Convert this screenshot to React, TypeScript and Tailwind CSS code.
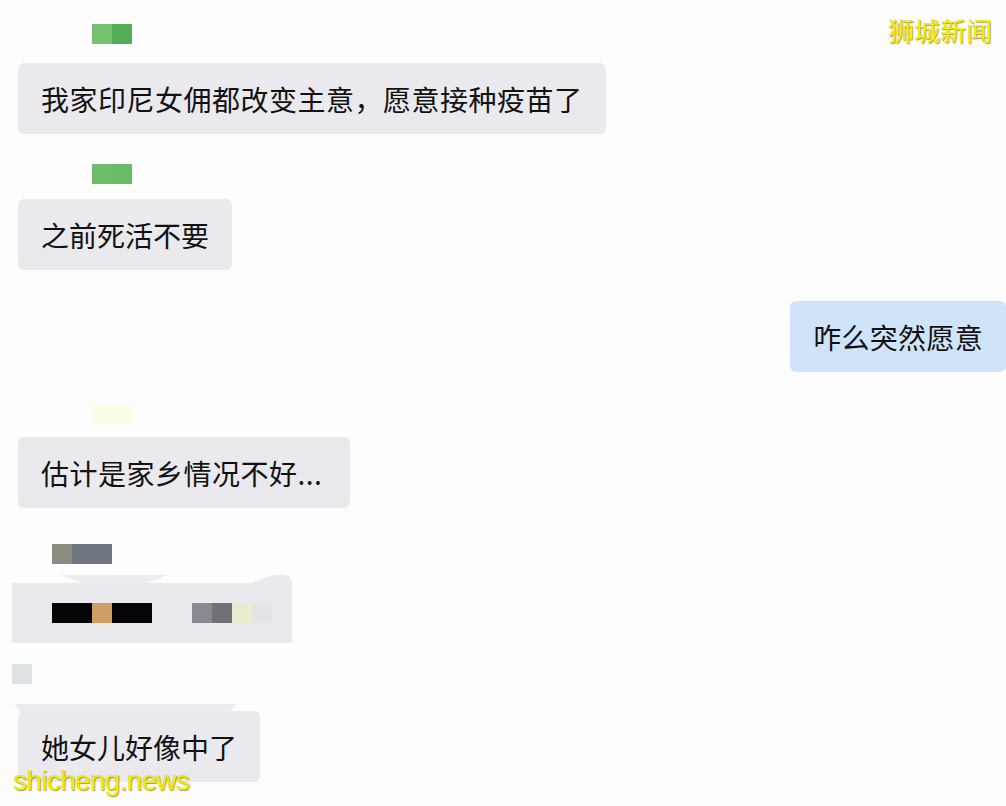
const cjk = { fontFamily: '"Noto Sans CJK SC", "Noto Sans", sans-serif' };

function Bubble({ text, blue = false, extra = '' }: { text: string; blue?: boolean; extra?: string }) {
  return (
    <div
      className={`h-[71px] px-[23px] flex items-center rounded-[6px] text-[28px] leading-none text-[#111] ${
        blue ? 'bg-[#cfe3f9]' : 'bg-[#e9e9ee]'
      } ${extra}`}
      style={cjk}
    >
      {text}
    </div>
  );
}

export default function App() {
  return (
    <div className="relative w-[1006px] h-[806px] overflow-hidden bg-[#fdfdfe]">
      <div className="flex flex-col items-start pt-[24px]">
        {/* sender 1 */}
        <div className="ml-[92px] flex h-[20px]">
          <div className="w-[20px] bg-[#75c271]" />
          <div className="w-[20px] bg-[#56ad57]" />
        </div>
        <div className="mt-[19px] ml-[18px]">
          <Bubble text="我家印尼女佣都改变主意，愿意接种疫苗了" extra="tracking-[0.5px]" />
        </div>

        <div className="mt-[30px] ml-[92px] flex h-[20px]">
          <div className="w-[20px] bg-[#6dbd69]" />
          <div className="w-[20px] bg-[#69bb66]" />
        </div>
        <div className="mt-[15px] ml-[18px]">
          <Bubble text="之前死活不要" />
        </div>

        {/* me */}
        <div className="mt-[31px] self-end">
          <Bubble text="咋么突然愿意" blue extra="tracking-[0.3px]" />
        </div>

        <div className="mt-[32px] ml-[92px] w-[40px] h-[20px] bg-[#fcfde6]" />
        <div className="mt-[13px] ml-[18px]">
          <Bubble text="估计是家乡情况不好..." extra="tracking-[0.5px] pr-[28px]" />
        </div>

        {/* censored reply */}
        <div className="mt-[36px] ml-[52px] flex h-[20px]">
          <div className="w-[20px] bg-[#8b8b80]" />
          <div className="w-[40px] bg-[#6f7680]" />
        </div>
        <div className="relative mt-[11px] ml-[12px] w-[280px] h-[68px]">
          <div className="absolute left-[48px] top-0 w-[108px] h-[8px] bg-[#ededf1] [clip-path:polygon(0_0,100%_0,80%_100%,20%_100%)]" />
          <div className="absolute right-0 top-0 w-[44px] h-[10px] bg-[#e9e9ee] rounded-tr-[8px] [clip-path:polygon(0_100%,40%_20%,60%_0,100%_0,100%_100%)]" />
          <div className="absolute left-0 right-0 top-[8px] bottom-0 bg-[#e9e9ee] flex items-center">
            <div className="ml-[40px] flex h-[20px]">
              <div className="w-[40px] bg-[#050505]" />
              <div className="w-[20px] bg-[#d19d67]" />
              <div className="w-[40px] bg-[#050308]" />
            </div>
            <div className="ml-[40px] flex h-[20px]">
              <div className="w-[20px] bg-[#8a8893]" />
              <div className="w-[20px] bg-[#717174]" />
              <div className="w-[20px] bg-[#ececd3]" />
              <div className="w-[20px] bg-[#e4e4e6]" />
            </div>
          </div>
        </div>

        <div className="mt-[21px] ml-[12px] w-[20px] h-[20px] bg-[#dde2e5]" />
        <div className="relative mt-[20px] ml-[14px] pt-[7px]">
          <div className="absolute left-0 top-0 w-[222px] h-[8px] bg-[#ececf0] [clip-path:polygon(0_0,100%_0,97%_100%,3%_100%)]" />
          <div className="ml-[4px]">
            <Bubble text="她女儿好像中了" />
          </div>
        </div>
      </div>

      {/* watermarks */}
      <div
        className="absolute right-[14px] top-[17px] text-[26px] leading-none text-[#f3ee00] [text-shadow:1px_1px_1px_rgba(90,80,0,0.6)]"
        style={cjk}
      >
        狮城新闻
      </div>
      <div
        className="absolute left-[13px] top-[767px] text-[28px] leading-none tracking-[-0.7px] text-[#f0ec00] [text-shadow:1px_1px_1px_rgba(90,80,0,0.6)]"
        style={{ fontFamily: '"Liberation Sans", Arial, sans-serif' }}
      >
        shicheng.news
      </div>
    </div>
  );
}
